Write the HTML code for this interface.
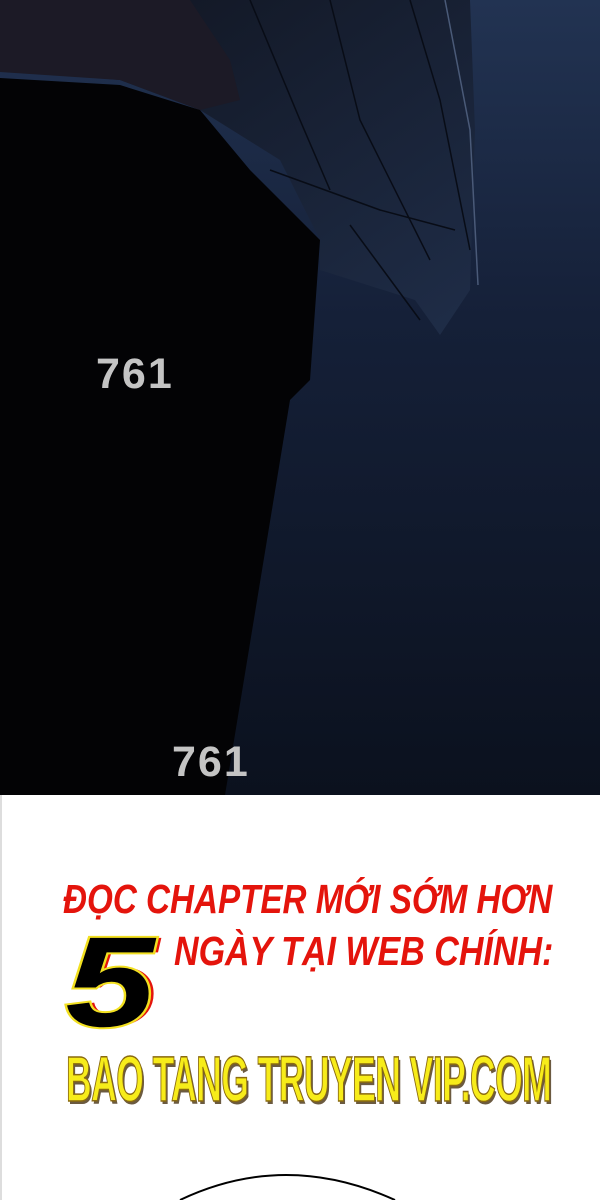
<!DOCTYPE html>
<html><head><meta charset="utf-8"><style>
html,body{margin:0;padding:0;width:600px;height:1200px;overflow:hidden;background:#fff}
.n{position:absolute;font-family:"Liberation Sans",sans-serif;font-weight:bold;color:#c4c4c4;font-size:43px;letter-spacing:2px}
.t{position:absolute;font-family:"Liberation Sans",sans-serif;font-weight:bold;font-style:italic;color:#e4140c;white-space:nowrap;transform-origin:0 0}
</style></head><body>
<svg width="600" height="1200" style="position:absolute;left:0;top:0">
<defs>
<linearGradient id="bg" x1="0" y1="0" x2="0" y2="1">
<stop offset="0" stop-color="#223352"/><stop offset="0.4" stop-color="#152038"/><stop offset="1" stop-color="#0b111e"/>
</linearGradient>
<linearGradient id="cape" x1="0" y1="0" x2="1" y2="1">
<stop offset="0" stop-color="#10141f"/><stop offset="1" stop-color="#1f2d48"/>
</linearGradient>
</defs>
<rect x="0" y="0" width="600" height="795" fill="url(#bg)"/>
<polygon points="0,0 470,0 475,130 470,290 440,335 415,300 320,270 320,240 280,160 200,110 120,80 0,70" fill="url(#cape)"/>
<polygon points="0,0 190,0 230,60 240,100 200,110 120,80 0,72" fill="#1c1a26"/>
<polygon points="0,78 120,85 200,110 250,170 320,240 310,380 290,400 225,795 0,795" fill="#030305"/>
<g stroke="#080c16" stroke-width="1.5" fill="none">
<path d="M250,0 L300,120 L330,190"/><path d="M330,0 L360,120 L430,260"/><path d="M410,0 L440,100 L470,250"/><path d="M270,170 L380,210 L455,230"/><path d="M350,225 L420,320"/>
</g>
<path d="M445,0 L470,130 L478,285" stroke="#4a5a78" stroke-width="1.5" fill="none"/>
<rect x="0" y="795" width="600" height="405" fill="#fff"/>
<rect x="0" y="795" width="2" height="405" fill="#ddd"/>
<path d="M180,1200 Q285,1150 395,1200" stroke="#000" stroke-width="2" fill="none"/>
<g transform="translate(110,0) scale(1.25,1) translate(-110,0)">
<text x="114" y="1026" font-family="Liberation Sans,sans-serif" font-weight="bold" font-style="italic" font-size="128" fill="#e4140c" text-anchor="middle">5</text>
<text x="110" y="1026" font-family="Liberation Sans,sans-serif" font-weight="bold" font-style="italic" font-size="128" fill="#000" stroke="#f2e020" stroke-width="4" paint-order="stroke" text-anchor="middle">5</text>
</g>
</svg>
<div class="n" style="left:96px;top:350px">761</div>
<div class="n" style="left:172px;top:738px">761</div>
<div class="t" style="left:63px;top:876px;font-size:41px;transform:scaleX(0.81)">ĐỌC CHAPTER MỚI SỚM HƠN</div>
<div class="t" style="left:174px;top:928px;font-size:41px;transform:scaleX(0.83)">NGÀY TẠI WEB CHÍNH:</div>
<div style="position:absolute;left:66px;top:1042px;font-family:'Liberation Sans',sans-serif;font-weight:bold;font-size:64px;color:#f7ec1a;-webkit-text-stroke:1.5px #8a6a10;text-shadow:3px 3px 0 #6b5a40;white-space:nowrap;transform:scaleX(0.555);transform-origin:0 0;letter-spacing:-1px">BAO TANG TRUYEN VIP.COM</div>
</body></html>
